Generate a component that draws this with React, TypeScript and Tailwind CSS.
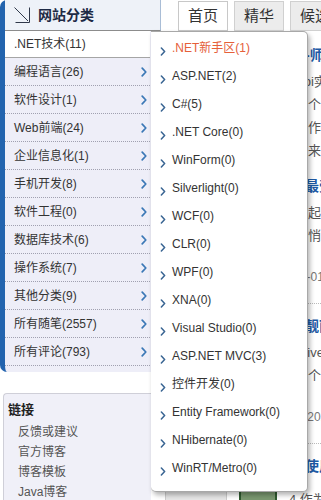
const cats: [string, string][] = [
  ["编程语言", "26"],
  ["软件设计", "1"],
  ["Web前端", "24"],
  ["企业信息化", "1"],
  ["手机开发", "8"],
  ["软件工程", "0"],
  ["数据库技术", "6"],
  ["操作系统", "7"],
  ["其他分类", "9"],
  ["所有随笔", "2557"],
  ["所有评论", "793"],
];

const subs = [
  ".NET新手区(1)",
  "ASP.NET(2)",
  "C#(5)",
  ".NET Core(0)",
  "WinForm(0)",
  "Silverlight(0)",
  "WCF(0)",
  "CLR(0)",
  "WPF(0)",
  "XNA(0)",
  "Visual Studio(0)",
  "ASP.NET MVC(3)",
  "控件开发(0)",
  "Entity Framework(0)",
  "NHibernate(0)",
  "WinRT/Metro(0)",
];

const links = ["反馈或建议", "官方博客", "博客模板", "Java博客"];

type Post = { title: string; lines: string[]; date?: string };

const posts: Post[] = [
  {
    title: "写给初入职场的程序员-师兄的忠告",
    lines: [
      "本文简单介绍一下如何Api实现第三方登录",
      "希望对大家有帮助，这是个人的一点小经验",
      "以下是我这几年来做的工作慨叹与总结",
      "分享给大家，欢迎大家都来交流指正",
    ],
  },
  {
    title: "程序员眼中二零一五年最受欢迎的编程语言",
    lines: ["今年开始编程语言的排名起伏很大", "而一些新兴的小众语言则悄然崛起"],
    date: "Coder老王 posted @ 2016-01-05 09:30 阅读(356)",
  },
  {
    title: "用几行简单的代码写出靓丽界面",
    lines: ["响应式布局也叫Responsive: 即", "能让同一套页面适配每一个设备的屏幕"],
    date: "前端开发者小李 posted @ 2016-01-04 21:12 阅读(208)",
  },
];

function Chevron({ className }: { className: string }) {
  return (
    <svg viewBox="0 0 6 10" className={className} fill="none">
      <path d="M1.2 1.2 4.8 5 1.2 8.8" stroke="currentColor" strokeWidth="1.7" strokeLinecap="round" strokeLinejoin="round" />
    </svg>
  );
}

export default function App() {
  return (
    <div className="relative h-[500px] w-[321px] overflow-hidden bg-white font-['Liberation_Sans','Noto_Sans_CJK_SC',sans-serif] text-[#333]">
      <div className="flex">
        {/* Sidebar */}
        <aside className="w-[161px] shrink-0">
          <div className="rounded-l-[7px] border-l-[5px] border-[#2364ae] bg-[#eeeef8] pb-[6px]">
            <div className="flex h-[31px] items-center gap-[7px] border-r border-b border-r-[#a9bdd6] border-b-[#8c8c8c] bg-[#eef2f8] pl-[8px]">
              <svg viewBox="0 0 18 18" className="h-[18px] w-[18px] text-[#30394a]" fill="none">
                <path d="M1.5 1.5 15 15M16.5 1.5v15M2.5 16.5h14" stroke="currentColor" strokeWidth="1" />
              </svg>
              <span className="text-[14px] font-bold text-[#1d2a45]">网站分类</span>
            </div>
            <div className="flex h-[27px] w-[145px] items-center border-b border-[#a5a5a5] bg-white pl-[9px] text-[12px]">
              .NET技术(11)
            </div>
            {cats.map(([name, n]) => (
              <div
                key={name}
                className="flex h-[28px] w-[145px] items-center justify-between border-b border-dotted border-[#a0a0b0] pl-[9px] pr-[3px] text-[12px]"
              >
                <span>
                  {name}({n})
                </span>
                <Chevron className="h-[10px] w-[6px] text-[#3b78b6]" />
              </div>
            ))}
          </div>

          <div className="ml-[3px] mt-[21px] w-[148px] rounded-tl-[4px] border-t border-l border-[#cfcfd8] bg-[#f0f0f8] pb-4 pt-[6px]">
            <div className="pl-[4px] text-[13px] font-bold leading-5 text-[#222]">链接</div>
            <ul className="mt-[2px] pl-[14px] text-[12px] leading-5 text-[#555]">
              {links.map((l) => (
                <li key={l}>{l}</li>
              ))}
            </ul>
          </div>
        </aside>

        {/* Main column (mostly hidden under the menu) */}
        <main className="w-[320px] shrink-0">
          <div className="ml-[17px] flex h-[31px] gap-[6px] pt-[1px] text-[15px]">
            <div className="flex w-[50px] items-center justify-center border border-[#c8c8c8] bg-white">首页</div>
            <div className="flex w-[50px] items-center justify-center border border-[#d0d0d0] bg-[#ececec]">精华</div>
            <div className="flex w-[50px] items-center justify-center border border-[#d0d0d0] bg-[#ececec]">候选</div>
          </div>

          {posts.map((p, i) => (
            <div
              key={p.title}
              className={`whitespace-nowrap pl-1 ${i === 0 ? "pt-[12px]" : i === 1 ? "pt-[12px]" : "border-t border-dotted border-[#bbb] pt-[10px]"}`}
            >
              <h3 className="text-[14px] font-bold leading-6 text-[#1e5aa5]">{p.title}</h3>
              <div className="mt-[3px] text-[13px] leading-[23px] text-[#555]">
                {p.lines.map((l) => (
                  <p key={l}>{l}</p>
                ))}
              </div>
              {p.date && <p className="mb-[16px] mt-[20px] text-[12px] leading-5 text-[#777]">{p.date}</p>}
            </div>
          ))}

          <div className="whitespace-nowrap border-t border-dotted border-[#bbb] pl-1 pt-[10px]">
            <h3 className="text-[14px] font-bold leading-6 text-[#1e5aa5]">在实际项目中如何正确使用缓存</h3>
            <div className="mt-[12px] flex items-start gap-[12px]">
              <div className="h-[40px] w-[62px] border border-[#ccc] bg-[#e6e6e6]" />
              <div className="h-[40px] w-[38px] border-2 border-[#2f5a2f] bg-[#7a9870]" />
              <p className="text-[13px] text-[#555]">4 作为一名开发者</p>
            </div>
          </div>
        </main>
      </div>

      {/* Dropdown submenu */}
      <div className="absolute left-[151px] top-[31px] h-[461px] w-[157px] rounded-r-[5px] rounded-bl-[5px] border-y border-r border-[#a8a8a8] bg-white pt-[2px] shadow-[2px_3px_5px_rgba(0,0,0,0.3)]">
        {subs.map((s, i) => (
          <div key={s} className="flex h-[28px] items-center pl-[9px] text-[12px]">
            <Chevron className="mr-[6px] mt-[6px] h-[9px] w-[6px] shrink-0 text-[#3a6593]" />
            <span className={i === 0 ? "text-[#e5603a]" : "text-[#333]"}>{s}</span>
          </div>
        ))}
      </div>
    </div>
  );
}
